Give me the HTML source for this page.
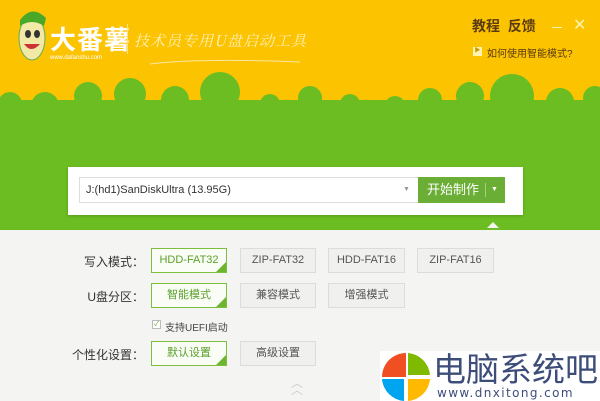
<!DOCTYPE html>
<html><head><meta charset="utf-8"><style>
*{margin:0;padding:0;box-sizing:border-box}
body{width:600px;height:401px;overflow:hidden;position:relative;background:#f4f4f2;font-family:"Liberation Sans","Noto Sans CJK SC",sans-serif}
.a{position:absolute}
.btn{position:absolute;height:25px;border:1px solid #dcdcdc;background:#f0f0ee;color:#555;font-size:11px;text-align:center;line-height:23px}
.sel{border-color:#7cbf3c;background:#fafcf6;color:#5ba12a}
.sel:after{content:"";position:absolute;right:0;bottom:0;border-left:10px solid transparent;border-bottom:10px solid #6db52e}
.lbl{position:absolute;width:80px;text-align:right;font-size:12px;color:#333;left:64px}
</style></head><body>
<svg class="a" style="left:0;top:0" width="600" height="230">
<rect width="600" height="230" fill="#fcc300"/>
<g fill="#6cbd22">
<rect y="100" width="600" height="130"/>
<circle cx="10" cy="104" r="12"/><circle cx="45" cy="106" r="14"/><circle cx="88" cy="96" r="14"/>
<circle cx="130" cy="94" r="16"/><circle cx="175" cy="100" r="14"/><circle cx="220" cy="92" r="20"/>
<circle cx="270" cy="104" r="10"/><circle cx="310" cy="98" r="12"/><circle cx="350" cy="104" r="10"/>
<circle cx="395" cy="106" r="10"/><circle cx="430" cy="100" r="12"/><circle cx="470" cy="96" r="14"/>
<circle cx="512" cy="96" r="22"/><circle cx="560" cy="102" r="14"/><circle cx="595" cy="98" r="12"/>
</g>
<path d="M150 64 Q200 58 300 62" stroke="#fde7a0" fill="none" stroke-width="1"/>
<ellipse cx="32" cy="38" rx="13" ry="22" fill="#f3e9a6" stroke="#6a5" stroke-width="1"/>
<path d="M20 20 Q32 4 46 18 L44 26 Q32 18 20 26Z" fill="#4aa829"/>
<ellipse cx="28" cy="34" rx="3" ry="4" fill="#333"/><ellipse cx="37" cy="34" rx="3" ry="4" fill="#333"/>
<path d="M24 44 Q31 54 40 44Z" fill="#c33"/>
</svg>
<div class="a" style="left:50px;top:20px;font-size:26px;font-weight:bold;color:#fff;letter-spacing:1px">大番薯</div>
<div class="a" style="left:50px;top:55px;font-size:6px;color:#fff">www.dafanshu.com</div>
<div class="a" style="left:127px;top:24px;width:1px;height:30px;background:#fde08a"></div>
<div class="a" style="left:134px;top:30px;font-size:15px;color:#fff0b8;font-family:'Noto Serif CJK SC',serif;letter-spacing:1px;font-style:italic">技术员专用U盘启动工具</div>
<div class="a" style="left:472px;top:16px;font-size:14px;font-weight:bold;color:#5a3a10">教程&nbsp; 反馈</div>
<div class="a" style="left:552px;top:27px;width:10px;height:1px;background:#fff3b0"></div>
<div class="a" style="left:573px;top:15px;font-size:16px;color:#fff3b0">✕</div>
<div class="a" style="left:473px;top:47px;width:9px;height:9px;background:#fff3b0;font-size:6px;color:#c90;line-height:9px;text-align:center">▶</div>
<div class="a" style="left:487px;top:45px;font-size:10px;color:#5a3a10">如何使用智能模式?</div>
<div class="a" style="left:68px;top:167px;width:455px;height:48px;background:#fff;box-shadow:0 1px 3px rgba(0,0,0,.2)"></div>
<div class="a" style="left:79px;top:177px;width:340px;height:26px;border:1px solid #ddd;background:#fff;font-size:11px;color:#333;line-height:24px;padding-left:6px">J:(hd1)SanDiskUltra (13.95G)<span class="a" style="left:323px;top:0;font-size:7px;color:#999">▼</span></div>
<div class="a" style="left:418px;top:177px;width:87px;height:26px;background:#6aae35;color:#fff;font-size:13px;line-height:26px;padding-left:9px">开始制作<span class="a" style="left:67px;top:6px;width:1px;height:14px;background:#a6d083"></span><span class="a" style="left:73px;top:0;font-size:7px">▼</span></div>
<div class="a" style="left:487px;top:222px;border:6px solid transparent;border-bottom-color:#f4f4f2;border-top:0"></div>
<div class="lbl" style="top:253px">写入模式：</div>
<div class="btn sel" style="left:151px;top:248px;width:76px">HDD-FAT32</div>
<div class="btn" style="left:240px;top:248px;width:76px">ZIP-FAT32</div>
<div class="btn" style="left:328px;top:248px;width:77px">HDD-FAT16</div>
<div class="btn" style="left:417px;top:248px;width:77px">ZIP-FAT16</div>
<div class="lbl" style="top:288px">U盘分区：</div>
<div class="btn sel" style="left:151px;top:283px;width:76px">智能模式</div>
<div class="btn" style="left:240px;top:283px;width:76px">兼容模式</div>
<div class="btn" style="left:328px;top:283px;width:77px">增强模式</div>
<div class="a" style="left:152px;top:320px;width:9px;height:9px;border:1px solid #bbb;background:#fff;font-size:7px;line-height:8px;color:#5a2;text-align:center">✓</div>
<div class="a" style="left:165px;top:319px;font-size:10px;color:#444">支持UEFI启动</div>
<div class="lbl" style="top:346px">个性化设置：</div>
<div class="btn sel" style="left:151px;top:341px;width:76px">默认设置</div>
<div class="btn" style="left:240px;top:341px;width:76px">高级设置</div>
<div class="a" style="left:291px;top:380px;font-size:12px;color:#ccc;line-height:7px">︿<br>︿</div>
<div class="a" style="left:380px;top:351px;width:220px;height:50px;background:#fff"></div>
<svg class="a" style="left:382px;top:353px" width="48" height="48"><path d="M24 24V0A24 24 0 0 0 0 24Z" fill="#f04e23"/><path d="M26 24V0A24 24 0 0 1 48 22H26Z" fill="#7fba00"/><path d="M24 26H0A24 24 0 0 0 22 48V26Z" fill="#00a4ef"/><path d="M26 26H48A24 24 0 0 1 26 48Z" fill="#ffb900"/></svg>
<div class="a" style="left:433px;top:350px;font-size:33px;color:#3d4d7a;line-height:40px">电脑系统吧</div>
<div class="a" style="left:437px;top:386px;font-size:12px;color:#3d4d7a;letter-spacing:1.4px;font-family:'DejaVu Sans',sans-serif">www.dnxitong.com</div>
</body></html>
